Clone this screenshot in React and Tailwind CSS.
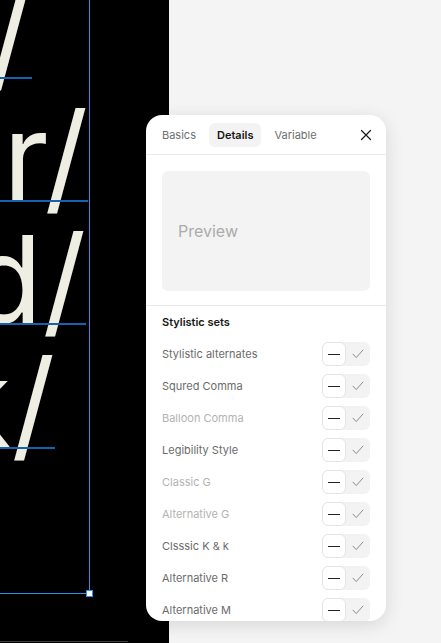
import React from "react";

const lines = [
  { text: "/", top: "top-[-27px]", wrap: "w-[32px]", under: "top-[77px] w-[32px]" },
  { text: "ar/", top: "top-[96px]", wrap: "w-[88px]", under: "top-[200px] w-[88px]" },
  { text: "d/", top: "top-[219px]", wrap: "w-[86px]", under: "top-[323px] w-[86px]" },
  { text: "k/", top: "top-[343px]", wrap: "w-[55px]", under: "top-[447px] w-[55px]" },
];

const rows = [
  { label: "Stylistic alternates", off: false },
  { label: "Squred Comma", off: false },
  { label: "Balloon Comma", off: true },
  { label: "Legibility Style", off: false },
  { label: "Classic G", off: true },
  { label: "Alternative G", off: true },
  { label: "Clsssic K & k", off: false },
  { label: "Alternative R", off: false },
  { label: "Alternative M", off: false },
];

const Toggle = () => (
  <div className="flex h-6 w-12 rounded-md bg-[#f3f3f3]">
    <div className="flex h-6 w-6 items-center justify-center rounded-md border border-[#e4e4e4] bg-white">
      <div className="h-px w-[12px] bg-[#222]" />
    </div>
    <div className="flex h-6 w-6 items-center justify-center">
      <svg width="12" height="10" viewBox="0 0 12 10" fill="none">
        <path d="M1 5.2 L4.2 8.6 L11 1" stroke="#8c8c8c" strokeWidth="1" strokeLinecap="round" strokeLinejoin="round" />
      </svg>
    </div>
  </div>
);

export default function App() {
  return (
    <div className="relative h-[643px] w-[441px] overflow-hidden bg-[#f4f4f4] font-['Inter',sans-serif]">
      {/* canvas */}
      <div className="relative h-full w-[169px] overflow-hidden bg-black">
        {lines.map((l, i) => (
          <React.Fragment key={i}>
            <div className={`absolute left-0 ${l.top} ${l.wrap} flex justify-end`}>
              <span className="whitespace-nowrap text-[121px] font-normal leading-none text-[#efeee3]">
                {l.text}
              </span>
            </div>
            <div className={`absolute left-0 h-[2px] bg-[#1663ad] ${l.under}`} />
          </React.Fragment>
        ))}
        <div className="absolute left-[89px] top-0 h-[593px] w-px bg-[#2b91ee]" />
        <div className="absolute left-0 top-[593px] h-px w-[89px] bg-[#2b91ee]" />
        <div className="absolute left-[86px] top-[590px] h-[7px] w-[7px] border border-[#2b91ee] bg-white" />
        <div className="absolute left-0 top-[641px] h-px w-[128px] bg-[#3d3d3d]" />
      </div>

      {/* panel */}
      <div className="absolute left-[146px] top-[115px] flex h-[506px] w-[240px] flex-col overflow-hidden rounded-2xl bg-white shadow-[0_4px_18px_rgba(0,0,0,0.12)]">
        <div className="flex h-[40px] shrink-0 items-center border-b border-[#e8e8e8] pl-2 pr-[14px] pt-px">
          <div className="flex items-center gap-[5px]">
            <div className="px-2 py-1 text-[11px] text-[#6f6f6f]">Basics</div>
            <div className="rounded-md bg-[#f3f3f3] px-2 py-1 text-[11px] font-semibold text-[#151515]">Details</div>
            <div className="px-2 py-1 text-[11px] text-[#6f6f6f]">Variable</div>
          </div>
          <svg className="ml-auto" width="12" height="12" viewBox="0 0 12 12" fill="none">
            <path d="M1.5 1.5 L10.5 10.5 M10.5 1.5 L1.5 10.5" stroke="#1a1a1a" strokeWidth="1.2" strokeLinecap="round" />
          </svg>
        </div>

        <div className="shrink-0 border-b border-[#e8e8e8] px-4 pb-[14px] pt-4">
          <div className="flex h-[120px] items-center rounded-md bg-[#f3f3f3] px-4">
            <span className="text-[16px] text-[#ababab]">Preview</span>
          </div>
        </div>

        <div className="flex flex-col">
          <div className="flex h-8 items-center px-4 text-[11px] font-semibold text-[#161616]">Stylistic sets</div>
          {rows.map((r) => (
            <div key={r.label} className="flex h-8 shrink-0 items-center justify-between px-4">
              <span className={`text-[11px] ${r.off ? "text-[#b3b3b3]" : "text-[#6b6b6b]"}`}>{r.label}</span>
              <Toggle />
            </div>
          ))}
        </div>
      </div>
    </div>
  );
}
